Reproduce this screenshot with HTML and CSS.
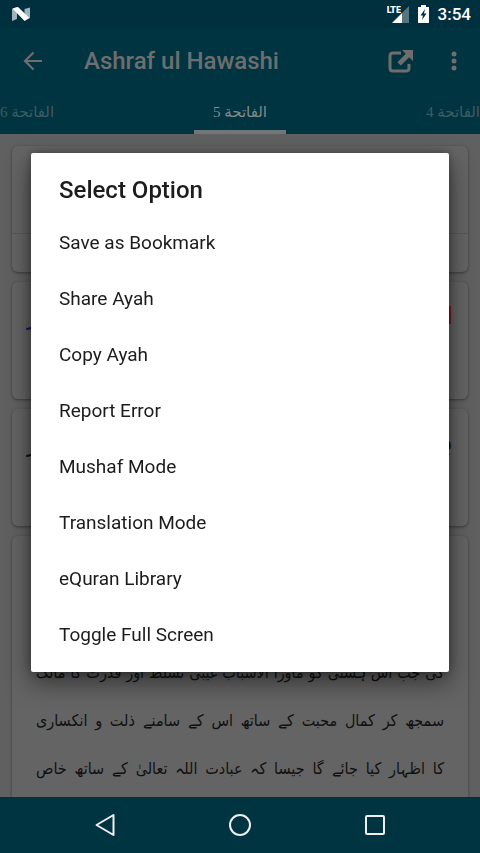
FILE: index.html
```html
<!DOCTYPE html>
<html lang="en">
<head>
<meta charset="utf-8">
<meta name="viewport" content="width=device-width, initial-scale=1">
<title>Ashraf ul Hawashi</title>
<link rel="stylesheet" href="styles.css">
</head>
<body>
<div class="screen">
  <div class="status">
    <svg class="logo" width="18" height="14" viewBox="0 0 18 14" aria-hidden="true">
      <path fill="#9fb4ba" d="M0 2 5 0v12L0 14zM18 .5 12.500 2v11l5.500-2z"/>
      <path fill="#fff" d="M.5 1.500 6 0 17.500 11 12.500 14z"/>
    </svg>
    <div class="signal">
      <span class="lte">LTE</span>
      <svg width="17" height="17" viewBox="0 0 17 17" aria-hidden="true">
        <path fill="#55757f" d="M17 0v17H10V7z"/>
        <path fill="#fff" d="M10 7v10H0z"/>
      </svg>
    </div>
    <svg class="battery" width="11" height="18" viewBox="0 0 11 18" aria-hidden="true">
      <path fill="#fff" d="M3 0h5v2h3v16H0V2h3z"/>
      <path fill="#00303d" d="M7 4 2.500 10.500H5L4 15l4.500-6.500H6z"/>
    </svg>
    <span class="clock">3:54</span>
  </div>
  <header class="appbar">
    <button class="icon-button" aria-label="Back">
      <svg width="20" height="20" viewBox="0 0 20 20"><path d="M19 10H2M10.500 1.500 2 10l8.500 8.500" fill="none" stroke="currentColor" stroke-width="2.200"/></svg>
    </button>
    <h1 class="title">Ashraf ul Hawashi</h1>
    <button class="icon-button" aria-label="Open">
      <svg width="26" height="24" viewBox="0 0 26 24"><path d="M13 4H5Q2 4 2 7v12q0 3 3 3h13q3 0 3-3v-4" fill="none" stroke="currentColor" stroke-width="3"/><path d="M14 1h11v11l-3.800-3.800-8.400 8.400-3.400-3.400 8.400-8.400z" fill="currentColor"/></svg>
    </button>
    <button class="icon-button more" aria-label="More">
      <svg width="6" height="20" viewBox="0 0 6 20" fill="currentColor"><circle cx="3" cy="3" r="2.500"/><circle cx="3" cy="10" r="2.500"/><circle cx="3" cy="17" r="2.500"/></svg>
    </button>
  </header>
  <nav class="tabs" lang="ar">
    <button class="tab first" dir="rtl">الفاتحة 6</button>
    <button class="tab current" dir="rtl">الفاتحة 5</button>
    <button class="tab last" dir="rtl">الفاتحة 4</button>
  </nav>
  <main class="content" dir="rtl" lang="ur">
    <section class="card head"><div class="rule"></div></section>
    <section class="card verse arabic"><span>ایاک</span><span class="blue">ر</span></section>
    <section class="card verse"><span>ہم</span><span>ر</span></section>
    <section class="card commentary">
      <p>گی جب اس ہستی کو ماورا الاسباب غیبی تسلط اور قدرت کا مالک</p>
      <p>سمجھ کر کمال محبت کے ساتھ اس کے سامنے ذلت و انکساری</p>
      <p>کا اظہار کیا جائے گا جیسا کہ عبادت اللہ تعالیٰ کے ساتھ خاص</p>
    </section>
  </main>
  <nav class="navbar">
    <button aria-label="Back"><svg width="20" height="24" viewBox="0 0 20 24"><path d="M18.500 2v20L1.500 12z"/></svg></button>
    <button aria-label="Home"><svg width="24" height="24" viewBox="0 0 24 24"><circle cx="12" cy="12" r="10"/></svg></button>
    <button aria-label="Recent apps"><svg width="22" height="22" viewBox="0 0 22 22"><rect x="2" y="2" width="18" height="18" rx="1"/></svg></button>
  </nav>
</div>
<div class="overlay">
  <div class="dialog" role="dialog" aria-labelledby="dialog-title">
    <h2 id="dialog-title">Select Option</h2>
    <button>Save as Bookmark</button>
    <button>Share Ayah</button>
    <button>Copy Ayah</button>
    <button>Report Error</button>
    <button>Mushaf Mode</button>
    <button>Translation Mode</button>
    <button>eQuran Library</button>
    <button>Toggle Full Screen</button>
  </div>
</div>
</body>
</html>
```
FILE: styles.css
```css
* { box-sizing: border-box; }
body {
  margin: 0;
  font-family: Roboto, sans-serif;
  background: #606060;
}
button {
  border: 0;
  padding: 0;
  background: none;
  font: inherit;
  color: inherit;
}
svg { display: block; }
.screen {
  height: 100vh;
  display: flex;
  flex-direction: column;
  overflow: hidden;
}
.status {
  flex: 0 0 28px;
  display: flex;
  align-items: center;
  gap: 9px;
  padding: 0 9px 0 12px;
  background: #00303d;
  color: #fff;
}
.logo { margin-right: auto; }
.signal { position: relative; padding-left: 4px; }
.lte {
  position: absolute;
  left: -1px;
  top: 0;
  font: 700 9px/8px "DejaVu Sans Condensed", sans-serif;
}
.clock { font-size: 17px; font-weight: 500; }
.appbar {
  flex: 0 0 66px;
  display: flex;
  align-items: center;
  padding: 0 14px 0 12px;
  background: #003441;
  color: #6e6e6e;
}
.icon-button {
  width: 42px;
  height: 48px;
  display: grid;
  place-items: center;
}
.more { margin-left: 20px; width: 24px; }
.title {
  flex: 1;
  margin: 0;
  padding-left: 30px;
  font-size: 24px;
  font-weight: 500;
}
.tabs {
  flex: 0 0 40px;
  display: grid;
  grid-template-columns: 1fr 92px 1fr;
  background: #003441;
  color: #3f5c62;
}
.tab {
  border-bottom: 4px solid transparent;
  font: 15px "Liberation Serif", "DejaVu Sans", serif;
}
.first { text-align: left; }
.last { text-align: right; }
.current { border-color: #70767a; color: #85898a; }
.content {
  flex: 1;
  min-height: 0;
  display: flex;
  flex-direction: column;
  gap: 10px;
  padding: 12px 12px 0;
  overflow: hidden;
  font-family: "DejaVu Sans Condensed", "DejaVu Sans", sans-serif;
  color: #111;
}
.card {
  flex: none;
  background: #646464;
  border-radius: 6px;
  box-shadow: 0 1px 3px rgba(0, 0, 0, .4);
}
.head { height: 126px; padding-top: 87px; }
.rule { border-top: 1px solid #575757; }
.verse {
  height: 117px;
  display: flex;
  justify-content: space-between;
  padding: 20px 15px 0;
  font-size: 24px;
}
.arabic { color: #801414; }
.blue { color: #10106e; }
.commentary {
  height: 400px;
  padding: 113px 24px 0;
  font-size: 16px;
  line-height: 48px;
}
.commentary p {
  margin: 0;
  white-space: nowrap;
  text-align: justify;
  text-align-last: justify;
}
.navbar {
  flex: 0 0 56px;
  display: flex;
  justify-content: center;
  background: #003441;
}
.navbar button {
  width: 135px;
  display: grid;
  place-items: center;
}
.navbar svg {
  fill: none;
  stroke: #eee;
  stroke-width: 2;
  stroke-linejoin: round;
}
.overlay {
  position: fixed;
  inset: 28px 0 56px;
  display: flex;
  align-items: center;
  padding: 0 31px;
}
.dialog {
  flex: 1;
  display: flex;
  flex-direction: column;
  padding: 21px 0 10px;
  background: #fff;
  border-radius: 2px;
  box-shadow: 0 10px 24px rgba(0, 0, 0, .5), 0 0 8px rgba(0, 0, 0, .3);
  color: #1c1c1c;
}
.dialog h2 {
  margin: 0 28px 8px;
  font-size: 24px;
  line-height: 32px;
  font-weight: 500;
}
.dialog button {
  height: 56px;
  padding: 0 28px;
  text-align: left;
  font-size: 19px;
}
```
